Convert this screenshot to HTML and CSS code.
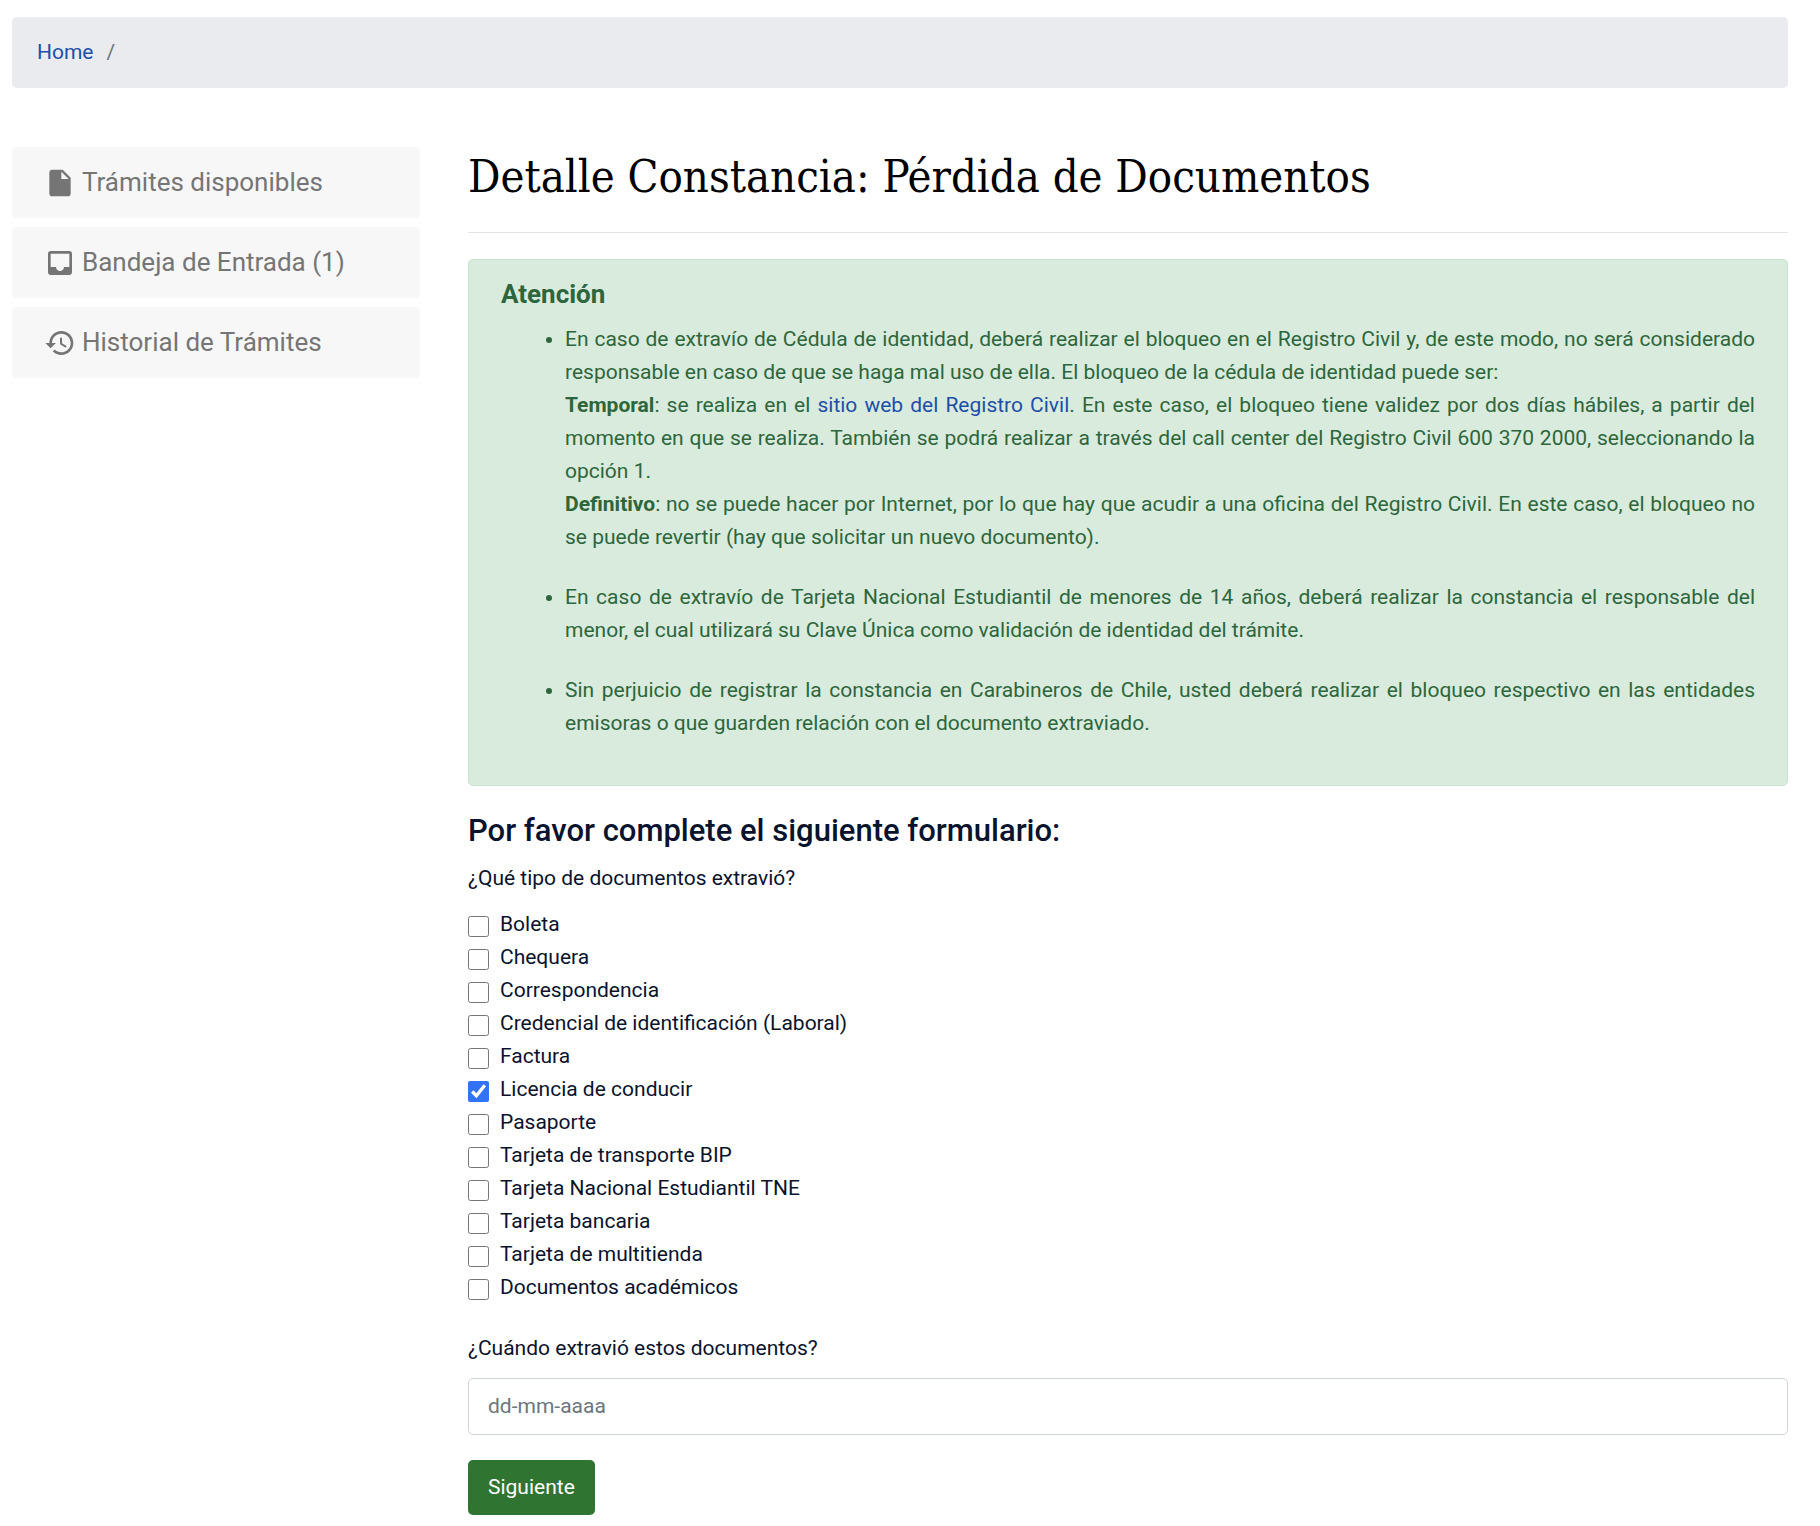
FILE: index.html
```html
<!DOCTYPE html>
<html lang="es">
<head>
  <meta charset="UTF-8" />
  <meta name="viewport" content="width=device-width, initial-scale=1.0"/>
  <title>Detalle Constancia: Pérdida de Documentos</title>
  <link rel="stylesheet" href="styles.css">
</head>
<body>

  <div class="container">
    <nav class="breadcrumb">
      <a href="#">Home</a>
      <span class="separator">/</span>
    </nav>

    <div class="row">
      <aside class="sidebar">
        <ul class="side-menu">
          <li>
            <a href="#">
              <svg class="icon" viewBox="0 0 24 24"><path d="M6 2c-1.1 0-1.99.9-1.99 2L4 20c0 1.1.89 2 1.99 2H18c1.1 0 2-.9 2-2V8l-6-6H6zm7 7V3.5L18.5 9H13z"/></svg>
              Trámites disponibles
            </a>
          </li>
          <li>
            <a href="#">
              <svg class="icon" viewBox="0 0 24 24"><path d="M19 3H4.99c-1.11 0-1.98.89-1.98 2L3 19c0 1.1.88 2 1.99 2H19c1.1 0 2-.9 2-2V5c0-1.11-.9-2-2-2zm0 12h-4c0 1.66-1.35 3-3 3s-3-1.34-3-3H4.99V5H19v10z"/></svg>
              Bandeja de Entrada (1)
            </a>
          </li>
          <li>
            <a href="#">
              <svg class="icon" viewBox="0 0 24 24"><path d="M13 3c-4.97 0-9 4.03-9 9H1l3.89 3.89.07.14L9 12H6c0-3.87 3.13-7 7-7s7 3.13 7 7-3.13 7-7 7c-1.93 0-3.68-.79-4.94-2.06l-1.42 1.42C8.27 19.99 10.51 21 13 21c4.97 0 9-4.03 9-9s-4.03-9-9-9zm-1 5v5l4.28 2.54.72-1.21-3.5-2.08V8H12z"/></svg>
              Historial de Trámites
            </a>
          </li>
        </ul>
      </aside>

      <main class="content">
        <h1>Detalle Constancia: Pérdida de Documentos</h1>
        <hr>

        <div class="alert">
          <h4>Atención</h4>
          <ul>
            <li>En caso de extravío de Cédula de identidad, deberá realizar el bloqueo en el Registro Civil y, de este modo, no será considerado responsable en caso de que se haga mal uso de ella. El bloqueo de la cédula de identidad puede ser:<br>
              <strong>Temporal</strong>: se realiza en el <a href="#">sitio web del Registro Civil</a>. En este caso, el bloqueo tiene validez por dos días hábiles, a partir del momento en que se realiza. También se podrá realizar a través del call center del Registro Civil 600 370 2000, seleccionando la opción 1.<br>
              <strong>Definitivo</strong>: no se puede hacer por Internet, por lo que hay que acudir a una oficina del Registro Civil. En este caso, el bloqueo no se puede revertir (hay que solicitar un nuevo documento).</li>
            <li>En caso de extravío de Tarjeta Nacional Estudiantil de menores de 14 años, deberá realizar la constancia el responsable del menor, el cual utilizará su Clave Única como validación de identidad del trámite.</li>
            <li>Sin perjuicio de registrar la constancia en Carabineros de Chile, usted deberá realizar el bloqueo respectivo en las entidades emisoras o que guarden relación con el documento extraviado.</li>
          </ul>
        </div>

        <form>
          <h3>Por favor complete el siguiente formulario:</h3>
          <fieldset class="documents">
            <legend>¿Qué tipo de documentos extravió?</legend>
            <label class="check"><input type="checkbox" name="documentos"> Boleta</label>
            <label class="check"><input type="checkbox" name="documentos"> Chequera</label>
            <label class="check"><input type="checkbox" name="documentos"> Correspondencia</label>
            <label class="check"><input type="checkbox" name="documentos"> Credencial de identificación (Laboral)</label>
            <label class="check"><input type="checkbox" name="documentos"> Factura</label>
            <label class="check"><input type="checkbox" name="documentos" checked> Licencia de conducir</label>
            <label class="check"><input type="checkbox" name="documentos"> Pasaporte</label>
            <label class="check"><input type="checkbox" name="documentos"> Tarjeta de transporte BIP</label>
            <label class="check"><input type="checkbox" name="documentos"> Tarjeta Nacional Estudiantil TNE</label>
            <label class="check"><input type="checkbox" name="documentos"> Tarjeta bancaria</label>
            <label class="check"><input type="checkbox" name="documentos"> Tarjeta de multitienda</label>
            <label class="check"><input type="checkbox" name="documentos"> Documentos académicos</label>
          </fieldset>
          <div class="form-group">
            <label class="field-label" for="fecha">¿Cuándo extravió estos documentos?</label>
            <input class="form-control" type="text" id="fecha" placeholder="dd-mm-aaaa">
          </div>
          <button type="submit" class="btn">Siguiente</button>
        </form>
      </main>
    </div>
  </div>

</body>
</html>
```
FILE: styles.css
```css
:root {
  --text: #0a132d;
  --link: #1d4fa8;
  --muted: #757575;
  --success: #2d663c;
  --success-bg: #d9ebdc;
  --success-border: #c8e4ce;
  --btn: #307432;
}
* {
  box-sizing: border-box;
}
body {
  margin: 0;
  background: #fff;
  color: var(--text);
  font-family: Roboto, sans-serif;
  font-size: 21px;
  line-height: 33px;
}
a {
  color: var(--link);
  text-decoration: none;
}
h1,
h3,
h4 {
  margin: 0;
}
.container {
  padding: 17px 32px 10px 12px;
}
.breadcrumb {
  display: flex;
  gap: 13px;
  padding: 19px 25px;
  margin-bottom: 59px;
  background: #eaebef;
  border-radius: 5px;
}
.separator {
  color: #6c757d;
}
.row {
  display: flex;
  margin: 0 -24px;
}
.sidebar {
  flex: 0 0 25%;
  padding: 0 24px;
}
.side-menu {
  display: flex;
  flex-direction: column;
  gap: 9px;
  margin: 0;
  padding: 0;
  list-style: none;
}
.side-menu a {
  display: flex;
  align-items: center;
  gap: 6px;
  padding: 19px 32px;
  background: #f7f7f7;
  border-radius: 4px;
  color: var(--muted);
  font-size: 26px;
}
.icon {
  flex: none;
  width: 32px;
  height: 32px;
  fill: currentColor;
}
.content {
  flex: 1;
  min-width: 0;
  padding: 0 24px;
}
h1 {
  color: #000;
  font-family: "Roboto Slab", "DejaVu Serif Condensed", "DejaVu Serif", serif;
  font-size: 45px;
  font-weight: 400;
  line-height: 59px;
}
hr {
  margin: 26px 0;
  border: 0;
  border-top: 1px solid #e2e3e6;
}
.alert {
  margin-bottom: 26px;
  padding: 19px 32px 18px;
  background: var(--success-bg);
  border: 1px solid var(--success-border);
  border-radius: 5px;
  color: var(--success);
}
.alert h4 {
  margin-bottom: 13px;
  font-size: 26px;
  font-weight: 700;
  line-height: 31px;
}
.alert ul {
  margin: 0;
  padding-left: 64px;
  text-align: justify;
}
.alert li {
  margin-bottom: 27px;
}
h3 {
  margin-bottom: 13px;
  font-size: 31px;
  font-weight: 500;
  line-height: 37px;
}
.documents {
  margin: 0 0 28px;
  padding: 0;
  border: 0;
}
legend {
  margin-bottom: 13px;
  padding: 0;
}
.check {
  display: flex;
  align-items: center;
  gap: 11px;
}
.check input {
  width: 21px;
  height: 21px;
  margin: 4px 0 0;
  accent-color: #3273f6;
}
.form-group {
  margin-bottom: 25px;
}
.field-label {
  display: block;
  margin-bottom: 13px;
}
.form-control {
  display: block;
  width: 100%;
  padding: 11px 19px;
  border: 1px solid #ced4da;
  border-radius: 5px;
  color: var(--text);
  font: inherit;
}
.form-control::placeholder {
  color: #6c757d;
}
.btn {
  padding: 11px 20px;
  border: 0;
  border-radius: 5px;
  background: var(--btn);
  color: #fff;
  font: inherit;
  cursor: pointer;
}
```
